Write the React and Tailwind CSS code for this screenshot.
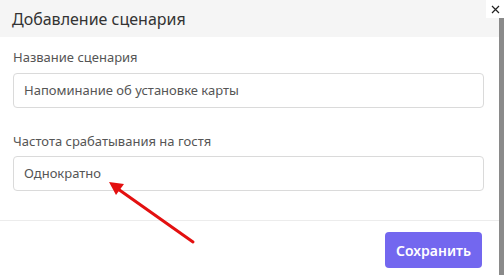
import React from "react";

export default function App() {
  return (
    <div
      className="relative w-[504px] h-[275px] overflow-hidden bg-white flex"
      style={{ fontFamily: '"Noto Sans", "Liberation Sans", sans-serif' }}
    >
      <div className="w-[499px] flex flex-col">
        <div className="h-[37px] bg-[#f5f5f5] flex items-center pl-[12px]">
          <h2 className="text-[16px] leading-none text-[#333] font-normal">Добавление сценария</h2>
        </div>
        <div className="px-[13px] pr-[15px] flex flex-col">
          <label className="mt-[12px] text-[13px] leading-[16px] text-[#555]">Название сценария</label>
          <div className="mt-[8px] h-[35px] border border-[#dadada] rounded-[4px] flex items-center pl-[10px] text-[13px] text-[#555]">
            Напоминание об установке карты
          </div>
          <label className="mt-[25px] text-[13px] leading-[16px] text-[#555]">Частота срабатывания на гостя</label>
          <div className="mt-[7px] h-[35px] border border-[#dadada] rounded-[4px] flex items-center pl-[10px] text-[13px] text-[#555]">
            Однократно
          </div>
        </div>
        <div className="mt-[29px] border-t border-[#ececec] flex justify-end pr-[17px] pt-[11px]">
          <button className="w-[97px] h-[36px] rounded-[4px] bg-[#7367ef] text-white text-[14px] font-semibold">
            Сохранить
          </button>
        </div>
      </div>
      <div className="w-[5px] flex flex-col">
        <div className="h-[18px] bg-white" />
        <div className="flex-1 bg-[#8a8a8a]" />
      </div>
      <div className="absolute top-0 right-0 w-[18px] h-[18px] bg-white flex items-center justify-center">
        <svg width="9" height="9" viewBox="0 0 9 9">
          <path d="M1 1 L8 8 M8 1 L1 8" stroke="#222" strokeWidth="1.2" />
        </svg>
      </div>
      <svg className="absolute left-0 top-0 pointer-events-none" width="504" height="275">
        <line x1="193" y1="242" x2="118" y2="189" stroke="#e31010" strokeWidth="3" strokeLinecap="round" />
        <polygon points="109,182 124,184 116,195" fill="#e31010" />
      </svg>
    </div>
  );
}
